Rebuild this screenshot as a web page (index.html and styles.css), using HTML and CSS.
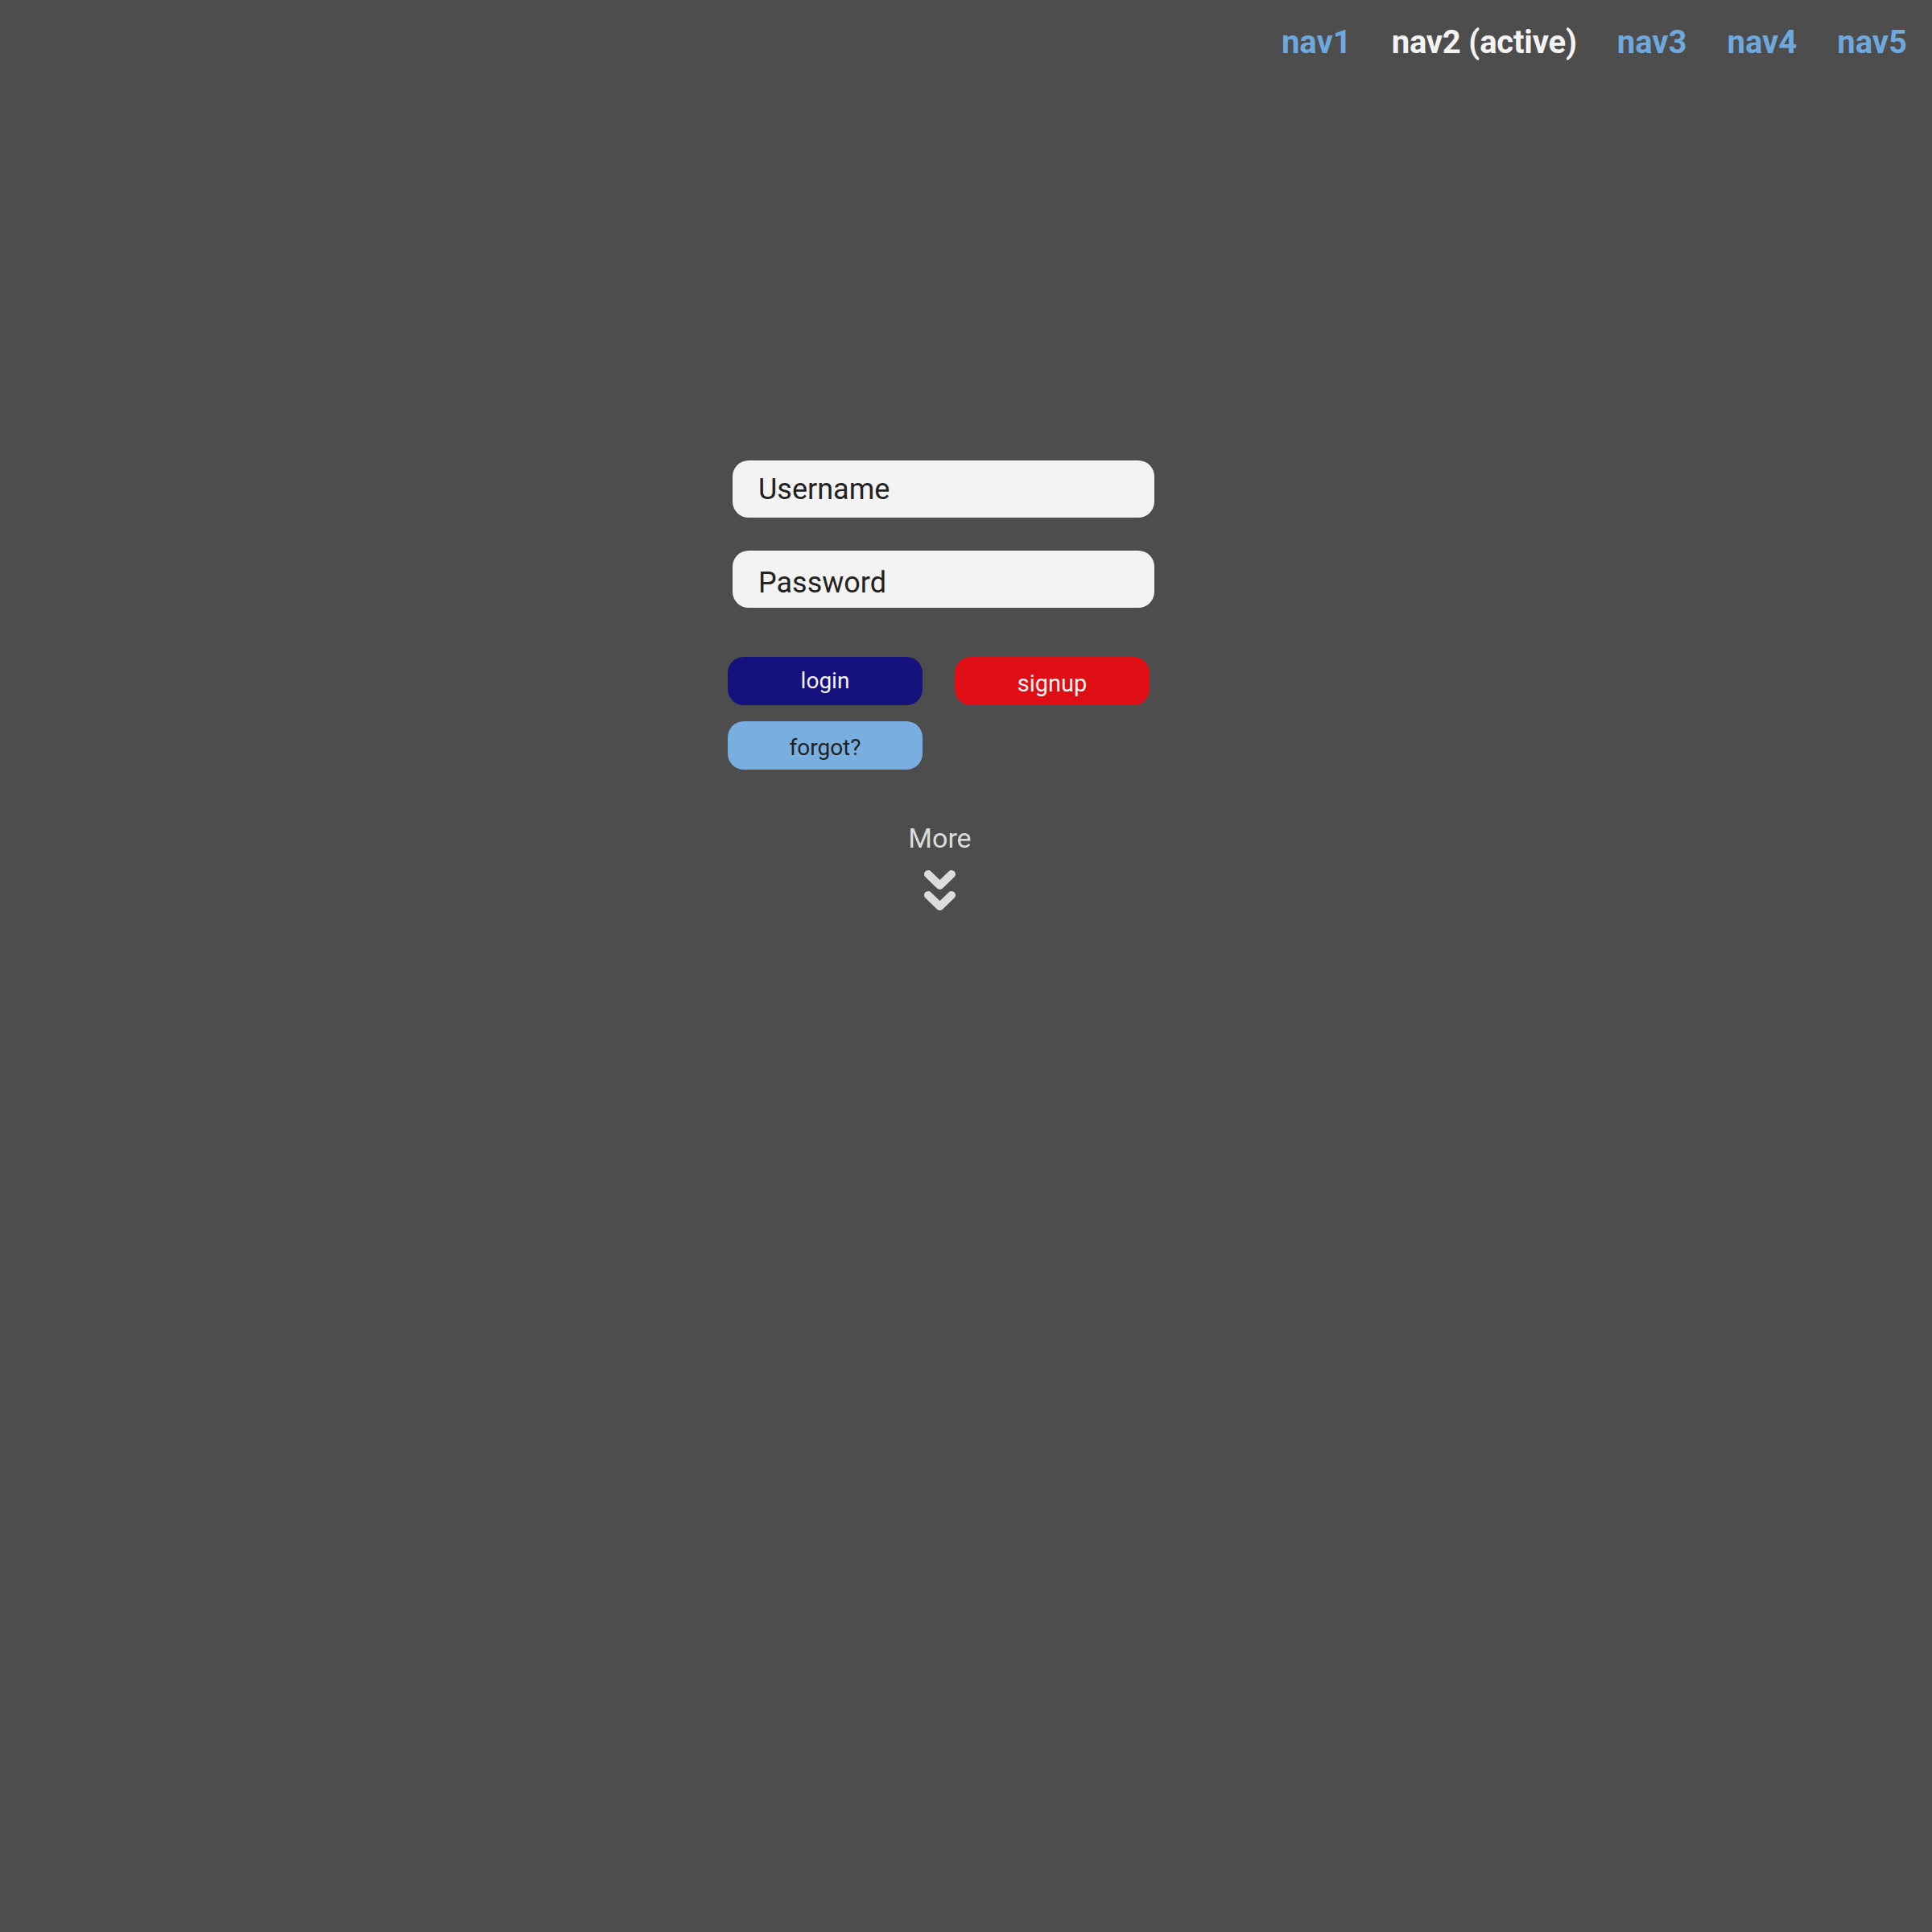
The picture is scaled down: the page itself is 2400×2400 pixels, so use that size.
FILE: index.html
```html
<!DOCTYPE html>
<html lang="en">
<head>
<meta charset="utf-8">
<title>Login</title>
<link rel="stylesheet" href="styles.css">
</head>
<body>
<header class="topbar">
  <nav class="nav">
    <a class="nav-link" href="#">nav1</a>
    <a class="nav-link is-active" href="#">nav2 (active)</a>
    <a class="nav-link" href="#">nav3</a>
    <a class="nav-link" href="#">nav4</a>
    <a class="nav-link" href="#">nav5</a>
  </nav>
</header>
<main class="login">
  <form class="login-form">
    <input class="field" type="text" placeholder="Username">
    <input class="field field-password" type="password" placeholder="Password">
    <div class="actions">
      <button type="button" class="btn btn-login">login</button>
      <button type="button" class="btn btn-signup">signup</button>
      <button type="button" class="btn btn-forgot">forgot?</button>
    </div>
  </form>
  <div class="more">
    <span class="more-label">More</span>
    <svg class="more-icon" width="41" height="54" viewBox="0 0 41 54" aria-hidden="true">
      <polyline points="6,6 20.5,20 35,6" fill="none" stroke="#dcdcdc" stroke-width="10" stroke-linecap="round" stroke-linejoin="round"/>
      <polyline points="6,32 20.5,46 35,32" fill="none" stroke="#dcdcdc" stroke-width="10" stroke-linecap="round" stroke-linejoin="round"/>
    </svg>
  </div>
</main>
</body>
</html>
```
FILE: styles.css
```css
html, body {
  margin: 0;
  padding: 0;
}

body {
  background: #4d4d4d;
  font-family: Roboto, "Liberation Sans", sans-serif;
  min-height: 2400px;
}

.topbar {
  display: flex;
  justify-content: flex-end;
  padding: 29px 31px 0 0;
}

.nav {
  display: flex;
  gap: 50px;
}

.nav-link {
  font-size: 40px;
  font-weight: 700;
  line-height: 47px;
  color: #6fa8dc;
  text-decoration: none;
}

.nav-link.is-active {
  color: #f3f3f3;
  letter-spacing: -0.2px;
}

.login {
  width: 524px;
  margin-left: 904px;
  padding-top: 496px;
}

.login-form {
  display: flex;
  flex-direction: column;
  margin: 0;
}

.field {
  box-sizing: border-box;
  width: 524px;
  height: 71px;
  margin: 0 0 0 6px;
  padding: 0 0 0 32px;
  border: none;
  border-radius: 20px;
  background: #f3f3f3;
  font-family: Roboto, "Liberation Sans", sans-serif;
  font-size: 36px;
  color: #222;
  outline: none;
}

.field + .field {
  margin-top: 41px;
}

.field-password {
  padding-top: 8px;
}

.field::placeholder {
  color: #222;
  opacity: 1;
}

.actions {
  display: grid;
  grid-template-columns: 242px 242px;
  column-gap: 40px;
  row-gap: 20px;
  margin-top: 61px;
}

.btn {
  height: 60px;
  border: none;
  border-radius: 20px;
  padding: 0;
  font-family: Roboto, "Liberation Sans", sans-serif;
  font-size: 28px;
  cursor: pointer;
}

.btn-login {
  background: #16127d;
  color: #f2f2f2;
  padding-bottom: 2px;
}

.btn-signup {
  background: #df0e14;
  color: #f2f2f2;
  font-size: 29px;
  padding-top: 6px;
}

.btn-forgot {
  background: #79aee0;
  color: #222;
  padding-top: 4px;
}

.more {
  display: flex;
  flex-direction: column;
  align-items: center;
  margin-top: 65px;
  padding-left: 3px;
  color: #dcdcdc;
}

.more-label {
  font-size: 34px;
  line-height: 40px;
}

.more-icon {
  display: block;
  margin-top: 19px;
}
```
